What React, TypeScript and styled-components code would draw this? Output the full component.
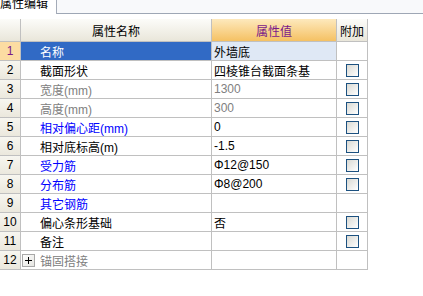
import React from "react";
import styled, { createGlobalStyle } from "styled-components";

const GlobalStyle = createGlobalStyle`
  html, body {
    margin: 0;
    padding: 0;
    background: #ffffff;
  }
  body {
    font-family: "Liberation Sans", "Noto Sans CJK SC", sans-serif;
    font-size: 12px;
  }
`;

// Layout
const Page = styled.div`
  width: 423px;
  height: 296px;
  display: flex;
  flex-direction: column;
  overflow: hidden;
  background: #ffffff;
`;

const TabBar = styled.div`
  display: flex;
  height: 14px;
`;

const Tab = styled.div`
  width: 56px;
  height: 14px;
  border-right: 1px solid #a4abb8;
  background: #ffffff;
  overflow: hidden;
`;

const TabLabel = styled.div`
  margin-top: -3px;
  line-height: 14px;
  font-size: 12px;
  color: #000;
  white-space: nowrap;
`;

const TabFill = styled.div`
  flex: 1;
  background: #f8f9fb;
  border-bottom: 1px solid #9ea7b5;
`;

const Grid = styled.div`
  margin-top: 5px;
  width: 367px;
  display: flex;
  flex-direction: column;
`;

const Row = styled.div<{ $header?: boolean }>`
  display: flex;
  height: ${($) => ($.$header ? 23 : 19)}px;
`;

const Cell = styled.div<{ $w: number }>`
  box-sizing: border-box;
  width: ${($) => $.$w}px;
  flex: none;
  height: 100%;
  border-right: 1px solid #c0c0c0;
  border-bottom: 1px solid #c0c0c0;
  display: flex;
  align-items: center;
  white-space: nowrap;
  overflow: hidden;
`;

const HeadCell = styled(Cell)<{ $hot?: boolean }>`
  justify-content: center;
  background: ${($) =>
    $.$hot
      ? "linear-gradient(to bottom, #fde9bd, #f5c163)"
      : "linear-gradient(to bottom, #fcfcf9, #e9e6da)"};
  color: ${($) => ($.$hot ? "#7a1a8a" : "#000")};
`;

const NumCell = styled(Cell)<{ $active?: boolean }>`
  justify-content: center;
  background: ${($) =>
    $.$active
      ? "#fcdca2"
      : "linear-gradient(to bottom, #f7f6f0, #ebe8dd)"};
  color: ${($) => ($.$active ? "#7a1a8a" : "#000")};
`;

const NameCell = styled(Cell)<{ $color: string; $selected?: boolean }>`
  padding-left: 19px;
  background: ${($) => ($.$selected ? "#316ac5" : "#ffffff")};
  color: ${($) => ($.$selected ? "#ffffff" : $.$color)};
`;

const GroupName = styled(Cell)`
  padding-left: 1px;
  gap: 5px;
  color: #808080;
`;

const ValueCell = styled(Cell)<{ $color: string; $selected?: boolean }>`
  padding-left: 2px;
  background: ${($) => ($.$selected ? "#dfe8f5" : "#ffffff")};
  color: ${($) => $.$color};
`;

const ExtraCell = styled(Cell)`
  justify-content: center;
  background: #ffffff;
`;

const Check = styled.div`
  box-sizing: border-box;
  width: 13px;
  height: 13px;
  border: 1px solid #1c5180;
  background: linear-gradient(135deg, #d9d9d3, #ffffff);
`;

function PlusBox() {
  return (
    <svg width="13" height="13" viewBox="0 0 13 13">
      <defs>
        <linearGradient id="pb" x1="0" y1="0" x2="1" y2="1">
          <stop offset="0" stopColor="#ffffff" />
          <stop offset="1" stopColor="#e4e4e0" />
        </linearGradient>
      </defs>
      <rect x="0.5" y="0.5" width="12" height="12" fill="url(#pb)" stroke="#a8a8a8" />
      <path d="M3 6.5h7M6.5 3v7" stroke="#000" strokeWidth="1" />
    </svg>
  );
}

type Item = {
  name: string;
  value: string;
  color: string;
  check: boolean;
  dim?: boolean;
  group?: boolean;
};

const BLACK = "#000000";
const BLUE = "#0000ff";
const GRAY = "#808080";

const items: Item[] = [
  { name: "名称", value: "外墙底", color: BLACK, check: false },
  { name: "截面形状", value: "四棱锥台截面条基", color: BLACK, check: true },
  { name: "宽度(mm)", value: "1300", color: GRAY, check: true, dim: true },
  { name: "高度(mm)", value: "300", color: GRAY, check: true, dim: true },
  { name: "相对偏心距(mm)", value: "0", color: BLUE, check: true },
  { name: "相对底标高(m)", value: "-1.5", color: BLACK, check: true },
  { name: "受力筋", value: "Φ12@150", color: BLUE, check: true },
  { name: "分布筋", value: "Φ8@200", color: BLUE, check: true },
  { name: "其它钢筋", value: "", color: BLUE, check: false },
  { name: "偏心条形基础", value: "否", color: BLACK, check: true },
  { name: "备注", value: "", color: BLACK, check: true },
  { name: "锚固搭接", value: "", color: GRAY, check: false, group: true },
];

// Column widths incl. right grid line
const W = [21, 191, 125, 31];

export default function App() {
  const selected = 0;

  return (
    <Page>
      <GlobalStyle />
      <TabBar>
        <Tab>
          <TabLabel>属性编辑</TabLabel>
        </Tab>
        <TabFill />
      </TabBar>
      <Grid>
        <Row $header>
          <HeadCell $w={W[0]} />
          <HeadCell $w={W[1]}>属性名称</HeadCell>
          <HeadCell $w={W[2]} $hot>
            属性值
          </HeadCell>
          <HeadCell $w={W[3]}>附加</HeadCell>
        </Row>
        {items.map((it, i) => (
          <Row key={i}>
            <NumCell $w={W[0]} $active={i === selected}>
              {i + 1}
            </NumCell>
            {it.group ? (
              <GroupName $w={W[1]}>
                <PlusBox />
                <span>{it.name}</span>
              </GroupName>
            ) : (
              <NameCell $w={W[1]} $color={it.color} $selected={i === selected}>
                {it.name}
              </NameCell>
            )}
            <ValueCell
              $w={W[2]}
              $color={it.dim ? GRAY : BLACK}
              $selected={i === selected}
            >
              {it.value}
            </ValueCell>
            <ExtraCell $w={W[3]}>{it.check && <Check />}</ExtraCell>
          </Row>
        ))}
      </Grid>
    </Page>
  );
}
